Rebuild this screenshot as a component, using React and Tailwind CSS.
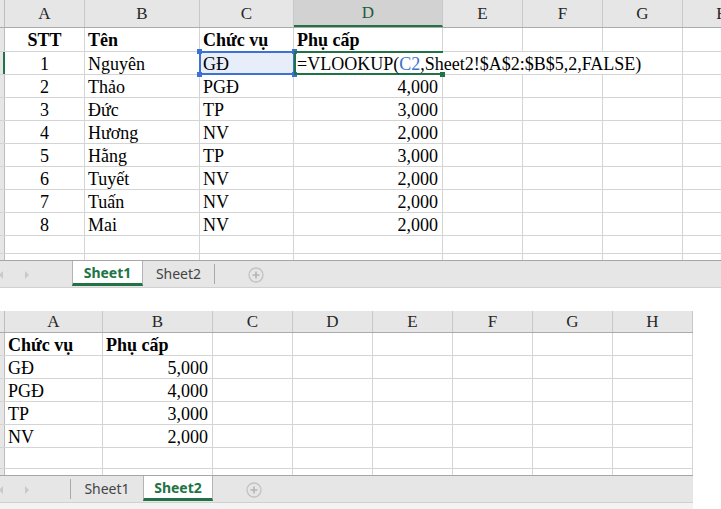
import React from "react";

const SERIF = "font-['Liberation_Serif','Times_New_Roman',serif]";
const SANS = "font-['Noto_Sans','Open_Sans',sans-serif]";

const topCols = [
    { label: "A", w: "w-[80px]" },
    { label: "B", w: "w-[115px]" },
    { label: "C", w: "w-[94px]" },
    { label: "D", w: "w-[149px]" },
    { label: "E", w: "w-[80px]" },
    { label: "F", w: "w-[80px]" },
    { label: "G", w: "w-[80px]" },
    { label: "H", w: "w-[80px]" },
];

const bottomCols = [
    { label: "A", w: "w-[98px]" },
    { label: "B", w: "w-[110px]" },
    { label: "C", w: "w-[80px]" },
    { label: "D", w: "w-[80px]" },
    { label: "E", w: "w-[80px]" },
    { label: "F", w: "w-[80px]" },
    { label: "G", w: "w-[80px]" },
    { label: "H", w: "w-[80px]" },
];

const staff = [
    ["2", "Thảo", "PGĐ", "4,000"],
    ["3", "Đức", "TP", "3,000"],
    ["4", "Hương", "NV", "2,000"],
    ["5", "Hằng", "TP", "3,000"],
    ["6", "Tuyết", "NV", "2,000"],
    ["7", "Tuấn", "NV", "2,000"],
    ["8", "Mai", "NV", "2,000"],
];

const allowance = [
    ["GĐ", "5,000"],
    ["PGĐ", "4,000"],
    ["TP", "3,000"],
    ["NV", "2,000"],
];

// one gridded cell; align = left | center | right
const Cell = ({ w, align = "left", bold, noRight, children }) => (
    <div
        className={`${w} shrink-0 h-full flex items-center leading-[22px] pt-[1px] whitespace-nowrap ${
            noRight ? "" : "border-r border-[#d4d4d4]"
        } ${align === "center" ? "justify-center" : align === "right" ? "justify-end pr-[4px]" : "justify-start pl-[3px]"} ${
            bold ? "font-bold" : ""
        }`}
    >
        {children}
    </div>
);

const Strip = ({ active }) => (
    <div
        className={`w-[5px] shrink-0 h-full bg-[#e6e6e6] border-r ${
            active ? "border-r-2 border-[#217346]" : "border-[#bdbdbd]"
        }`}
    />
);

const HeaderRow = ({ cols, height, selected }) => (
    <div className={`flex ${height} bg-[#e6e6e6] border-b border-[#ababab] ${SERIF}`}>
        <div className="w-[5px] shrink-0 h-full border-r border-[#bdbdbd]" />
        {cols.map((c) => (
            <div
                key={c.label}
                className={`${c.w} shrink-0 h-full flex items-center justify-center text-[17px] border-r border-[#c8c8c8] ${
                    selected === c.label
                        ? "bg-[#d2d2d2] text-[#1e5c38] border-b-2 border-b-[#217346]"
                        : "text-[#262626]"
                }`}
            >
                {c.label}
            </div>
        ))}
    </div>
);

const EmptyCells = ({ cols, from }) =>
    cols.slice(from).map((c) => <Cell key={c.label} w={c.w} />);

const PlusButton = () => (
    <svg width="16" height="16" viewBox="0 0 16 16" className="shrink-0">
        <circle cx="8" cy="8" r="7" fill="none" stroke="#c2c2c2" strokeWidth="1.3" />
        <path d="M8 4.5v7M4.5 8h7" stroke="#b5b5b5" strokeWidth="1.6" />
    </svg>
);

const NavArrows = () => (
    <div className="flex items-center h-full">
        <svg width="4" height="8" viewBox="0 0 4 8" className="-ml-[1px]">
            <path d="M4 0L0 4l4 4z" fill="#c9c9c9" />
        </svg>
        <svg width="4" height="8" viewBox="0 0 4 8" className="ml-[22px]">
            <path d="M0 0l4 4-4 4z" fill="#c9c9c9" />
        </svg>
    </div>
);

const TabBar = ({ active, width }) => (
    <div
        className={`${width} h-[28px] flex items-start bg-[#e6e6e6] border-t border-[#a6a6a6] border-b border-b-[#d0d0d0] ${SANS} text-[14px]`}
    >
        {active === 1 ? (
            <>
                <div className="w-[72px] h-[27px] shrink-0">
                    <NavArrows />
                </div>
                <div className="w-[71px] h-[25px] shrink-0 bg-white border-x border-[#b4b4b4] border-b-[3px] border-b-[#217346] flex items-center justify-center font-bold text-[#217346]">
                    Sheet1
                </div>
                <div className="w-[71px] h-[25px] shrink-0 flex items-center justify-center text-[#444]">
                    Sheet2
                </div>
                <div className="w-px h-[20px] mt-[3px] bg-[#a8a8a8] shrink-0" />
            </>
        ) : (
            <>
                <div className="w-[70px] h-[27px] shrink-0">
                    <NavArrows />
                </div>
                <div className="w-px h-[20px] mt-[3px] bg-[#a8a8a8] shrink-0" />
                <div className="w-[72px] h-[25px] shrink-0 flex items-center justify-center text-[#444]">
                    Sheet1
                </div>
                <div className="w-[70px] h-[25px] shrink-0 bg-white border-x border-[#b4b4b4] border-b-[3px] border-b-[#217346] flex items-center justify-center font-bold text-[#217346]">
                    Sheet2
                </div>
            </>
        )}
        <div className="ml-[33px] h-[27px] flex items-center">
            <PlusButton />
        </div>
    </div>
);

const Corner = ({ className, color }) => (
    <div className={`absolute w-[5px] h-[5px] ${color} ${className}`} />
);

const TopSheet = () => (
    <div className={`w-[721px] overflow-hidden ${SERIF} text-[18px] text-black`}>
        <HeaderRow cols={topCols} height="h-[28px]" selected="D" />

        {/* row 1 - headings */}
        <div className="flex h-[24px] border-b border-[#d4d4d4]">
            <Strip />
            <Cell w={topCols[0].w} align="center" bold>STT</Cell>
            <Cell w={topCols[1].w} bold>Tên</Cell>
            <Cell w={topCols[2].w} bold>Chức vụ</Cell>
            <Cell w={topCols[3].w} bold>Phụ cấp</Cell>
            <EmptyCells cols={topCols} from={4} />
        </div>

        {/* row 2 - the formula being edited */}
        <div className="flex h-[23px] border-b border-[#d4d4d4] relative">
            <Strip active />
            <Cell w={topCols[0].w} align="center">1</Cell>
            <Cell w={topCols[1].w}>Nguyên</Cell>
            <div className="w-[94px] shrink-0 h-full relative bg-[#e8eef9]">
                <div className="absolute -left-px -top-px -right-px -bottom-px border-2 border-[#3b72d4]" />
                <Corner color="bg-[#3b72d4]" className="-left-[3px] -top-[3px]" />
                <Corner color="bg-[#3b72d4]" className="-right-[3px] -top-[3px]" />
                <Corner color="bg-[#3b72d4]" className="-left-[3px] -bottom-[3px]" />
                <Corner color="bg-[#3b72d4]" className="-right-[3px] -bottom-[3px]" />
                <div className="relative h-full flex items-center leading-[22px] pt-[1px] pl-[3px]">GĐ</div>
            </div>
            <div className="w-[149px] shrink-0 h-full relative">
                <div className="absolute left-0 -top-px -bottom-px w-full border-l-2 border-t-2 border-b-2 border-[#217346]" />
                <Corner color="bg-[#217346]" className="-right-[2px] -bottom-[3px]" />
                <div className="relative z-10 h-full flex items-center leading-[22px] pt-[1px] pl-[3px] whitespace-nowrap">
                    =VLOOKUP(<span className="text-[#3b72d4]">C2</span>,Sheet2!$A$2:$B$5,2,FALSE)
                </div>
            </div>
            <Cell w={topCols[4].w} noRight />
            <Cell w={topCols[5].w} noRight />
            <Cell w={topCols[6].w} />
            <Cell w={topCols[7].w} />
        </div>

        {staff.map((r) => (
            <div key={r[0]} className="flex h-[23px] border-b border-[#d4d4d4]">
                <Strip />
                <Cell w={topCols[0].w} align="center">{r[0]}</Cell>
                <Cell w={topCols[1].w}>{r[1]}</Cell>
                <Cell w={topCols[2].w}>{r[2]}</Cell>
                <Cell w={topCols[3].w} align="right">{r[3]}</Cell>
                <EmptyCells cols={topCols} from={4} />
            </div>
        ))}

        <div className="flex h-[18px] border-b border-[#d4d4d4]">
            <Strip />
            <EmptyCells cols={topCols} from={0} />
        </div>
        <div className="flex h-[6px]">
            <Strip />
            <EmptyCells cols={topCols} from={0} />
        </div>

        <TabBar active={1} width="w-[721px]" />
    </div>
);

const BottomSheet = () => (
    <div className={`w-[693px] ${SERIF} text-[18px] text-black`}>
        <HeaderRow cols={bottomCols} height="h-[22px]" />

        <div className="flex h-[23px] border-b border-[#d4d4d4]">
            <Strip />
            <Cell w={bottomCols[0].w} bold>Chức vụ</Cell>
            <Cell w={bottomCols[1].w} bold>Phụ cấp</Cell>
            <EmptyCells cols={bottomCols} from={2} />
        </div>

        {allowance.map((r) => (
            <div key={r[0]} className="flex h-[23px] border-b border-[#d4d4d4]">
                <Strip />
                <Cell w={bottomCols[0].w}>{r[0]}</Cell>
                <Cell w={bottomCols[1].w} align="right">{r[1]}</Cell>
                <EmptyCells cols={bottomCols} from={2} />
            </div>
        ))}

        <div className="flex h-[21px] border-b border-[#d4d4d4]">
            <Strip />
            <EmptyCells cols={bottomCols} from={0} />
        </div>
        <div className="flex h-[6px]">
            <Strip />
            <EmptyCells cols={bottomCols} from={0} />
        </div>

        <TabBar active={2} width="w-[693px]" />
        <div className="h-[6px] bg-[#f3f3f3]" />
    </div>
);

export default function App() {
    return (
        <div className="w-[721px] h-[509px] bg-white overflow-hidden">
            <TopSheet />
            <div className="h-[23px]" />
            <BottomSheet />
        </div>
    );
}
